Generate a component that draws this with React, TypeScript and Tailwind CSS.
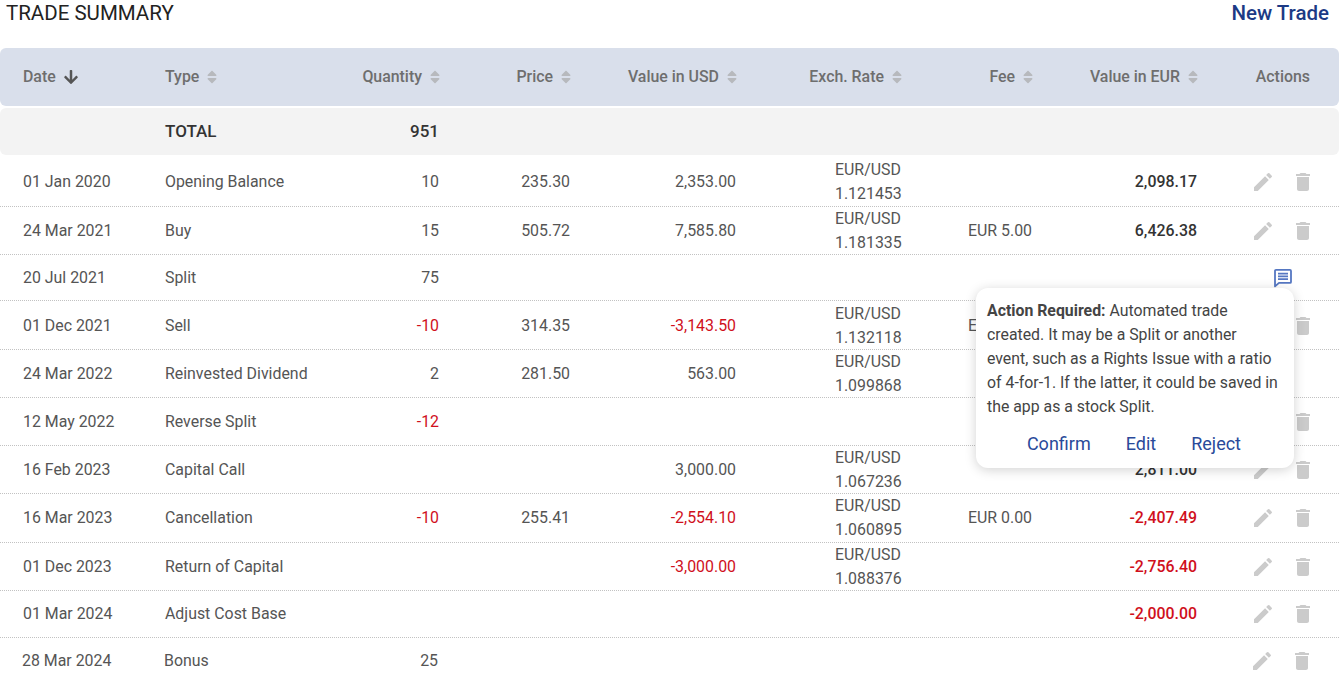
import React from "react";
import { FaArrowDown, FaSort } from "react-icons/fa";
import { MdEdit, MdDelete } from "react-icons/md";

const cols = "grid grid-cols-[142px_135px_140px_131px_166px_165px_131px_165px_117px] pl-[23px] items-center";

type Row = {
  h: string;
  date: string;
  type: string;
  qty?: string;
  price?: string;
  usd?: string;
  rate?: string;
  fee?: string;
  eur?: string;
  actions?: "edit" | "chat" | "none";
};

const rows: Row[] = [
  { h: "h-[52px] pt-[2px]", date: "01 Jan 2020", type: "Opening Balance", qty: "10", price: "235.30", usd: "2,353.00", rate: "1.121453", eur: "2,098.17" },
  { h: "h-[48px]", date: "24 Mar 2021", type: "Buy", qty: "15", price: "505.72", usd: "7,585.80", rate: "1.181335", fee: "EUR 5.00", eur: "6,426.38" },
  { h: "h-[46px]", date: "20 Jul 2021", type: "Split", qty: "75", actions: "chat" },
  { h: "h-[49px] pt-[1px]", date: "01 Dec 2021", type: "Sell", qty: "-10", price: "314.35", usd: "-3,143.50", rate: "1.132118", fee: "EUR 5.00" },
  { h: "h-[48px]", date: "24 Mar 2022", type: "Reinvested Dividend", qty: "2", price: "281.50", usd: "563.00", rate: "1.099868", actions: "none" },
  { h: "h-[48px]", date: "12 May 2022", type: "Reverse Split", qty: "-12" },
  { h: "h-[48px]", date: "16 Feb 2023", type: "Capital Call", usd: "3,000.00", rate: "1.067236", eur: "2,811.00" },
  { h: "h-[49px]", date: "16 Mar 2023", type: "Cancellation", qty: "-10", price: "255.41", usd: "-2,554.10", rate: "1.060895", fee: "EUR 0.00", eur: "-2,407.49" },
  { h: "h-[48px]", date: "01 Dec 2023", type: "Return of Capital", usd: "-3,000.00", rate: "1.088376", eur: "-2,756.40" },
  { h: "h-[47px]", date: "01 Mar 2024", type: "Adjust Cost Base", eur: "-2,000.00" },
];

function Money({ value, bold }: { value?: string; bold?: boolean }) {
  const neg = value?.startsWith("-");
  return (
    <div className={`text-right pr-[1px] ${neg ? "text-[#d0101c]" : bold ? "text-[#333]" : ""} ${bold ? "font-medium" : ""}`}>
      {value}
    </div>
  );
}

function Head({ label, right = true, active }: { label: string; right?: boolean; active?: boolean }) {
  return (
    <div className={`flex items-center gap-[5px] whitespace-nowrap ${right ? "justify-end -mr-[3px]" : ""}`}>
      <span>{label}</span>
      {active ? <FaArrowDown className="text-[16px] text-[#555] ml-[2px]" /> : <FaSort className="text-[16px] text-[#b7b9bd]" />}
    </div>
  );
}

function ChatIcon() {
  return (
    <svg width="20" height="20" viewBox="0 0 20 20" fill="none" className="text-[#5577c2]">
      <path d="M2 2.9a1 1 0 0 1 1-1h14a1 1 0 0 1 1 1v11a1 1 0 0 1-1 1H6L2 18.4z" stroke="currentColor" strokeWidth="1.8" strokeLinejoin="round" />
      <path d="M5 5.6h10M5 8.4h10M5 11.2h10" stroke="currentColor" strokeWidth="1.7" />
    </svg>
  );
}

function Actions({ kind = "edit" }: { kind?: Row["actions"] }) {
  if (kind === "none") return <div />;
  if (kind === "chat")
    return (
      <div className="flex justify-end pr-[22px]">
        <ChatIcon />
      </div>
    );
  return (
    <div className="flex items-center justify-end gap-[16px] text-[#cbcbcb]">
      <MdEdit className="text-[24px]" />
      <MdDelete className="text-[24px]" />
    </div>
  );
}

function TradeRow({ row }: { row: Row }) {
  return (
    <div className={`${cols} ${row.h} border-b border-dotted border-[#c2c2c2] text-[#555] box-border`}>
      <div>{row.date}</div>
      <div className="whitespace-nowrap">{row.type}</div>
      <Money value={row.qty} />
      <Money value={row.price} />
      <Money value={row.usd} />
      <div className="leading-[24px] ml-[98px] whitespace-nowrap">
        {row.rate && (
          <>
            <div>EUR/USD</div>
            <div>{row.rate}</div>
          </>
        )}
      </div>
      <div className="pl-[66px] whitespace-nowrap">{row.fee}</div>
      <Money value={row.eur} bold />
      <Actions kind={row.actions} />
    </div>
  );
}

export default function App() {
  return (
    <div className="relative h-[682px] w-[1339px] overflow-hidden bg-white font-['Roboto',sans-serif] text-[15.9px]">
      {/* Title */}
      <div className="flex h-[48px] items-start justify-between pl-[6px] pr-[10px] text-[20.5px] leading-[27px]">
        <div className="text-[#222]">TRADE SUMMARY</div>
        <div className="font-medium text-[#1c3a85]">New Trade</div>
      </div>

      {/* Header */}
      <div className={`${cols} h-[58px] rounded-[6px] bg-[#d9dfeb] font-medium text-[#6e6e6e]`}>
        <Head label="Date" right={false} active />
        <Head label="Type" right={false} />
        <Head label="Quantity" />
        <Head label="Price" />
        <Head label="Value in USD" />
        <Head label="Exch. Rate" />
        <Head label="Fee" />
        <Head label="Value in EUR" />
        <div className="text-right pr-[5px]">Actions</div>
      </div>

      {/* Total */}
      <div className={`${cols} mt-[2px] h-[47px] rounded-[6px] bg-[#f3f3f3] font-medium text-[#333] text-[17px]`}>
        <div />
        <div>TOTAL</div>
        <div className="text-right pr-[1px]">951</div>
      </div>

      {rows.map((r) => (
        <TradeRow key={r.date} row={r} />
      ))}

      {/* Last row sits a pixel to the left */}
      <div className={`${cols} h-[46px] -ml-px text-[#555]`}>
        <div>28 Mar 2024</div>
        <div>Bonus</div>
        <Money value="25" />
        <div />
        <div />
        <div />
        <div />
        <div />
        <Actions />
      </div>

      {/* Popover */}
      <div className="absolute left-[976px] top-[288px] h-[180px] w-[318px] rounded-[12px] bg-white pl-[11px] pr-[14px] pt-[11px] text-[#444] shadow-[0_2px_12px_rgba(0,0,0,0.18)]">
        <p className="leading-[24px] text-[15.85px]">
          <span className="font-bold">Action Required:</span> Automated trade created. It may be a Split or another event, such as a Rights Issue with a ratio of 4-for-1. If the latter, it could be saved in the app as a stock Split.
        </p>
        <div className="mt-[13px] flex justify-end gap-[35px] pr-[39px] text-[18px] leading-[24px] text-[#2a4a9a]">
          <span>Confirm</span>
          <span>Edit</span>
          <span>Reject</span>
        </div>
      </div>
    </div>
  );
}
